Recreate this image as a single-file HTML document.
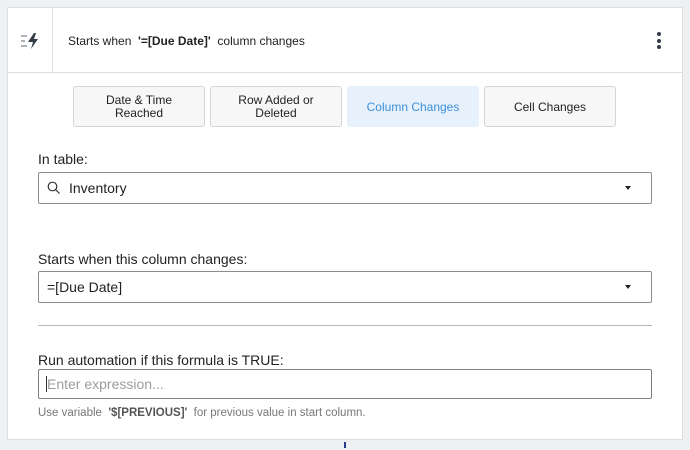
<!DOCTYPE html>
<html><head><style>
*{box-sizing:border-box;margin:0;padding:0}
body{width:690px;height:450px;background:#eef0f2;font-family:"Liberation Sans",sans-serif;position:relative;overflow:hidden;color:#222}
.card{position:absolute;left:7px;top:7px;width:676px;height:433px;background:#fff;border:1px solid #dcdee0}
.hdr{position:absolute;left:0;top:0;width:674px;height:65px;border-bottom:1px solid #dcdee0}
.vd{position:absolute;left:44px;top:0;width:1px;height:65px;background:#dcdee0}
.htxt{position:absolute;left:60px;top:26px;font-size:12px;color:#222}
.dots{position:absolute;left:649px;top:24px}
.dots i{display:block;width:4px;height:4px;border-radius:50%;background:#333c48;margin-bottom:2.5px}
.btn{position:absolute;top:78px;height:41px;width:132px;border:1px solid #d3d5d7;border-radius:3px;background:#f7f7f7;font-size:12px;text-align:center;display:flex;align-items:center;justify-content:center;line-height:13px;color:#222;padding-top:1px}
.btn.on{background:#e7f1fc;border-color:#e7f1fc;color:#3d8fd8}
.lbl{position:absolute;left:30px;font-size:14px;color:#222}
.inp{position:absolute;left:30px;width:614px;border:1px solid #8a8d90;border-radius:2px;font-size:14px}
.caret{position:absolute;right:20px;top:13px;width:0;height:0;border-left:3.5px solid transparent;border-right:3.5px solid transparent;border-top:4px solid #222}
</style></head><body>
<div class="card">
 <div class="hdr">
  <svg style="position:absolute;left:13px;top:25px" width="22" height="16" viewBox="0 0 22 16">
   <rect x="0" y="2" width="6" height="2" fill="#b0b4b8"/><rect x="0" y="7" width="4" height="2" fill="#b0b4b8"/><rect x="0" y="12" width="6" height="2" fill="#b0b4b8"/>
   <path d="M13 0 L7 9 L12 9 L10 16 L17 6 L13 6 L15 0 Z" fill="#333c48"/>
  </svg>
  <div class="vd"></div>
  <div class="htxt">Starts when &nbsp;<b>'=[Due Date]'</b>&nbsp; column changes</div>
  <div class="dots"><i></i><i></i><i></i></div>
 </div>
 <div class="btn" style="left:65px">Date &amp; Time<br>Reached</div>
 <div class="btn" style="left:202px">Row Added or<br>Deleted</div>
 <div class="btn on" style="left:339px">Column Changes</div>
 <div class="btn" style="left:476px">Cell Changes</div>

 <div class="lbl" style="top:143px">In table:</div>
 <div class="inp" style="top:164px;height:32px">
  <svg style="position:absolute;left:8px;top:8px" width="14" height="14" viewBox="0 0 14 14"><circle cx="5.5" cy="5.5" r="4.3" fill="none" stroke="#333" stroke-width="1.2"/><path d="M8.7 8.7 L12.5 12.5" stroke="#333" stroke-width="1.2"/></svg>
  <span style="position:absolute;left:30px;top:7px">Inventory</span><div class="caret"></div>
 </div>

 <div class="lbl" style="top:243px">Starts when this column changes:</div>
 <div class="inp" style="top:263px;height:32px">
  <span style="position:absolute;left:8px;top:7px">=[Due Date]</span><div class="caret"></div>
 </div>

 <div style="position:absolute;left:30px;top:317px;width:614px;height:1px;background:#b5b7b9"></div>

 <div class="lbl" style="top:344px">Run automation if this formula is TRUE:</div>
 <div class="inp" style="top:361px;height:30px;border-color:#7d8084">
  <span style="position:absolute;left:7px;top:6px;width:1px;height:16px;background:#333"></span>
  <span style="position:absolute;left:8px;top:6px;color:#9a9da0">Enter expression...</span>
 </div>
 <div style="position:absolute;left:30px;top:399px;font-size:11.5px;color:#777">Use variable &nbsp;<b style="color:#555">'$[PREVIOUS]'</b>&nbsp; for previous value in start column.</div>
</div>
<div style="position:absolute;left:344px;top:442px;width:2px;height:6px;background:#2b3a8c"></div>
</body></html>
